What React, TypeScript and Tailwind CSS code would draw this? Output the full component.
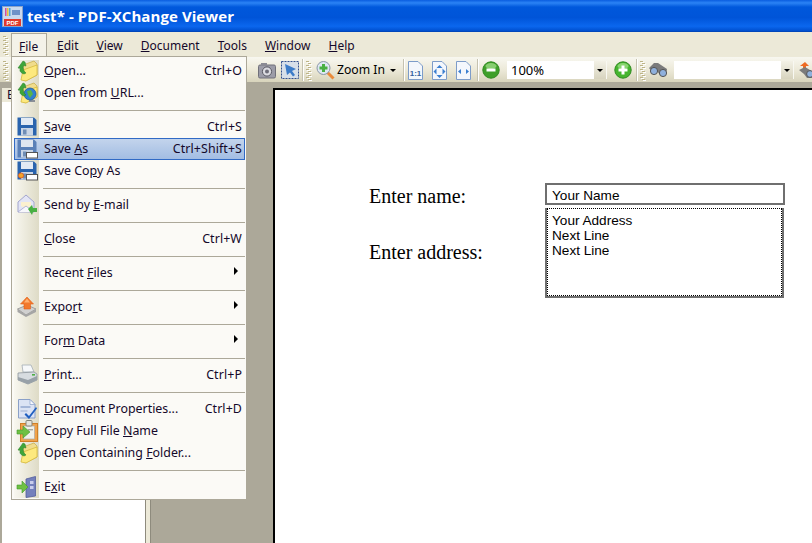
import React from "react";

const Folder = ({ globe }: { globe?: boolean }) => (
  <svg width="24" height="22" viewBox="0 0 24 22">
    <path d="M8 5 L19 1 L22 4 L22 15 L10 21 Z" fill="#f0dc8c" stroke="#c9b050" strokeWidth="0.8" />
    <path d="M8 10 L22 5 L22 15 L11 21 L6 20 Z" fill="#fde97e" stroke="#d6b93c" strokeWidth="0.8" />
    {globe ? <path d="M14 18 H20 V20 H14 Z" fill="#8a8f96" /> : null}
    {globe ? <circle cx="15" cy="12" r="6" fill="#2f7fd1" stroke="#1b5aa0" strokeWidth="0.8" /> : null}
    {globe ? <path d="M12 9 L16 8 L18 12 L15 16 L13 13 Z" fill="#57b34a" /> : null}
    <path d="M3 8 L8 1 L10 2 L11 6 L8.5 5.5 C7.5 8 8.5 11 11 13 L9 14 C5.5 13 4 10.5 5.5 8.5 Z" fill="#3fa63a" stroke="#2a7d28" strokeWidth="0.5" />
  </svg>
);
const Floppy = ({ variant }: { variant?: "as" | "copy" }) => (
  <svg width="24" height="22" viewBox="0 0 24 22">
    <path d="M2.5 1.5 H19 L21.5 4 V19.5 H2.5 Z" fill={variant === "as" ? "#5a80b8" : "#2a64ae"} />
    <rect x="6" y="2" width="12" height="7" fill={variant === "as" ? "#dfe6f0" : "#e2eaf4"} />
    <rect x="6" y="12" width="12" height="7.5" fill="#c9d5e5" />
    <rect x="8" y="13.5" width="3.5" height="5" fill="#6f8db5" />
    {variant ? <rect x="11.5" y="14.5" width="11" height="5.5" fill="#fff" stroke="#555" /> : null}
    {variant === "copy" ? <circle cx="6" cy="15.5" r="2.6" fill="#f4a52a" stroke="#d9531e" strokeWidth="0.8" /> : null}
  </svg>
);
const Mail = () => (
  <svg width="24" height="22" viewBox="0 0 24 22">
    <path d="M3 8 L11 1 L19 8 V18 H3 Z" fill="#e3e5f5" stroke="#a3a6cf" />
    <path d="M6 8 H16 V12 L11 15 L6 12 Z" fill="#fbf0cf" />
    <path d="M3 18 L11 12 L19 18" fill="#f7f7fc" stroke="#a3a6cf" strokeWidth="0.8" />
    <path d="M13 15 L17 11 L18 14 H22 V18 H18 L17 21 Z" fill="#49b043" />
  </svg>
);
const ExportIcon = () => (
  <svg width="24" height="22" viewBox="0 0 24 22">
    <path d="M2.5 13 L12 9 L21 13 L11 19 Z" fill="#d0d0d0" stroke="#8f8f8f" strokeWidth="0.8" />
    <path d="M2.5 13 V16 L11 21 L21 16 V13 L11 19 Z" fill="#a5a5a5" />
    <path d="M12 1 L18.5 8 H15.5 V13 H9 V8 H5.5 Z" fill="#f2782c" stroke="#e05f1a" strokeWidth="0.6" />
    <path d="M12 2.5 L9 6.5 H15 Z" fill="#ffb070" />
  </svg>
);
const Printer = () => (
  <svg width="24" height="22" viewBox="0 0 24 22">
    <path d="M7 1 H16 L19 8 H8 Z" fill="#f6f8fa" stroke="#a5adb5" strokeWidth="0.8" />
    <path d="M3 9 L19 8 L22 10 V16 L13 20 L3 16 Z" fill="#d7dce0" stroke="#8d959d" strokeWidth="0.8" />
    <path d="M3 13 L13 16 L22 12 V16 L13 20 L3 16 Z" fill="#98a1a8" />
    <rect x="17" y="10" width="3" height="1.6" fill="#4fae46" />
  </svg>
);
const DocProps = () => (
  <svg width="24" height="22" viewBox="0 0 24 22">
    <path d="M3.5 1.5 H15 L20 6.5 V20 H3.5 Z" fill="#dbe3f4" stroke="#8aa0c8" />
    <path d="M15 1.5 V6.5 H20 Z" fill="#f7f9fd" stroke="#8aa0c8" strokeWidth="0.7" />
    <rect x="5.5" y="8" width="10" height="2" fill="#a4b6d8" />
    <rect x="5.5" y="12" width="7" height="2" fill="#bcc9e2" />
    <path d="M11 15 L14 18 L21 9 L22 10.5 L14 21 L9.5 16.5 Z" fill="#1f5fc0" />
  </svg>
);
const Clip = () => (
  <svg width="24" height="22" viewBox="0 0 24 22">
    <rect x="5.5" y="3.5" width="17" height="18" fill="#f0a24a" stroke="#d07f28" />
    <rect x="8.5" y="6" width="11" height="13" fill="#f1f1ea" stroke="#aaa" strokeWidth="0.7" />
    <rect x="11" y="0.5" width="6" height="5.5" rx="1" fill="#e5e5e0" stroke="#85857a" />
    <rect x="13" y="9" width="5" height="1.4" fill="#a8a8a0" />
    <path d="M2 10 H8 V6 L15 12 L8 18 V14 H2 Z" fill="#6fc043" stroke="#3f9a2c" strokeWidth="0.6" />
  </svg>
);
const Door = () => (
  <svg width="24" height="22" viewBox="0 0 24 22">
    <path d="M11 3 L20.5 0.5 V20 L11 21.5 Z" fill="#7480bc" stroke="#525d9c" strokeWidth="0.8" />
    <rect x="15" y="5" width="3.5" height="3" fill="#c9cdec" />
    <rect x="15" y="10" width="3.5" height="3" fill="#c9cdec" />
    <path d="M2 9 H7 V5 L13 11 L7 17 V13 H2 Z" fill="#6fc043" stroke="#3f9a2c" strokeWidth="0.6" />
  </svg>
);

type Item =
  | { sep: true }
  | { sep?: false; pre: string; u: string; post: string; key?: string; icon?: React.ReactNode; sub?: boolean; active?: boolean };

const items: Item[] = [
  { pre: "", u: "O", post: "pen...", key: "Ctrl+O", icon: <Folder /> },
  { pre: "Open from ", u: "U", post: "RL...", icon: <Folder globe /> },
  { sep: true },
  { pre: "", u: "S", post: "ave", key: "Ctrl+S", icon: <Floppy /> },
  { pre: "Save ", u: "A", post: "s", key: "Ctrl+Shift+S", icon: <Floppy variant="as" />, active: true },
  { pre: "Save Co", u: "p", post: "y As", icon: <Floppy variant="copy" /> },
  { sep: true },
  { pre: "Send by ", u: "E", post: "-mail", icon: <Mail /> },
  { sep: true },
  { pre: "", u: "C", post: "lose", key: "Ctrl+W" },
  { sep: true },
  { pre: "Recent ", u: "F", post: "iles", sub: true },
  { sep: true },
  { pre: "Expo", u: "r", post: "t", sub: true, icon: <ExportIcon /> },
  { sep: true },
  { pre: "For", u: "m", post: " Data", sub: true },
  { sep: true },
  { pre: "", u: "P", post: "rint...", key: "Ctrl+P", icon: <Printer /> },
  { sep: true },
  { pre: "", u: "D", post: "ocument Properties...", key: "Ctrl+D", icon: <DocProps /> },
  { pre: "Copy Full File ", u: "N", post: "ame", icon: <Clip /> },
  { pre: "Open Containing ", u: "F", post: "older...", icon: <Folder /> },
  { sep: true },
  { pre: "E", u: "x", post: "it", icon: <Door /> },
];

const Grip = () => (
  <div className="flex w-[5px] shrink-0 flex-col gap-[1px] self-center">
    {[0, 1, 2, 3, 4, 5, 6, 7, 8, 9].map((i) => (
      <div key={i} className={`h-[1px] w-[3px] bg-[#bdb487] shadow-[1px_1px_0_#fff] ${i % 2 ? "ml-[2px]" : ""}`} />
    ))}
  </div>
);

const menus = [
  ["E", "dit"],
  ["V", "iew"],
  ["D", "ocument"],
  ["T", "ools"],
  ["W", "indow"],
  ["H", "elp"],
];

const Caret = () => <div className="h-0 w-0 border-x-[3px] border-t-[3px] border-x-transparent border-t-black" />;

const Divider = () => <div className="h-[22px] w-[1px] shrink-0 bg-[#c5c2b0] shadow-[1px_0_0_#fff]" />;

const PageIcon = ({ label, kind }: { label?: string; kind?: "fit" | "width" }) => (
  <svg width="15" height="19" viewBox="0 0 15 19">
    <path d="M0.5 0.5 H10 L14.5 5 V18.5 H0.5 Z" fill="#f4f7fc" stroke="#7d9cc9" />
    {label ? <text x="7.5" y="15" textAnchor="middle" fontSize="8" fontWeight="700" fill="#345f9e" fontFamily="Liberation Sans">{label}</text> : null}
    {kind === "fit" ? <path d="M7.5 4 L10.5 7 H4.5 Z M7.5 17 L4.5 14 H10.5 Z M1.5 10.5 L4.5 7.5 V13.5 Z M13.5 10.5 L10.5 7.5 V13.5 Z" fill="#3b7fd0" /> : null}
    {kind === "width" ? <path d="M2 10.5 L5 8 V13 Z M13 10.5 L10 8 V13 Z" fill="#3b7fd0" /> : null}
  </svg>
);

const RoundBtn = ({ plus }: { plus?: boolean }) => (
  <svg width="18" height="18" viewBox="0 0 18 18">
    <circle cx="9" cy="9" r="8.2" fill={plus ? "#45b52e" : "#3f9f2a"} stroke="#2f8a20" />
    <ellipse cx="9" cy="5" rx="5.5" ry="3" fill="#a6e28e" opacity="0.7" />
    <rect x="4.5" y="7.5" width="9" height="3" fill="#fff" />
    {plus ? <rect x="7.5" y="4.5" width="3" height="9" fill="#fff" /> : null}
  </svg>
);

const Binoc = () => (
  <svg width="20" height="16" viewBox="0 0 20 16">
    <path d="M1 6 L6 1 H10 L19 7 L18 13 H12 L9 9 L5 11 Z" fill="#7b7b7b" />
    <circle cx="6" cy="9" r="3.6" fill="#8fb0dc" stroke="#555" />
    <circle cx="15" cy="11" r="3.6" fill="#8fb0dc" stroke="#555" />
  </svg>
);

const Combo = ({ w, text }: { w: string; text?: string }) => (
  <div className={`flex h-[18px] items-stretch justify-between border-r border-[#f8f8f2] bg-white ${w}`}>
    <span className="pl-[4px] text-[13px] leading-[19px] text-black">{text}</span>
    <div className="flex w-[12px] items-center justify-center bg-gradient-to-b from-[#f3f1e6] to-[#d8d4bf]">
      <Caret />
    </div>
  </div>
);

export default function App() {
  return (
    <div className="relative flex h-[543px] w-[812px] flex-col overflow-hidden bg-[#aca899] font-['Noto_Sans',sans-serif] text-[12px] text-[#14082a]">
      {/* title bar */}
      <div className="flex h-[32px] items-center bg-[linear-gradient(to_bottom,#0a5de0_0%,#2b83f5_9%,#0058dc_22%,#0054d8_55%,#0b67ee_82%,#0050d0_96%,#003fae_100%)] pl-[2px]">
        <svg width="21" height="21" viewBox="0 0 21 21">
          <rect x="0.5" y="0.5" width="20" height="20" fill="#c9d9ef" stroke="#8ba3c9" />
          <rect x="3" y="2" width="1.5" height="8" fill="#d64f9a" />
          <rect x="5" y="2" width="1.5" height="8" fill="#e9c23a" />
          <rect x="7" y="2" width="1.5" height="8" fill="#53a8d6" />
          <rect x="10" y="4" width="8" height="5" fill="#6f92c9" />
          <rect x="2" y="13" width="17" height="7" fill="#e23a2c" />
          <text x="10.5" y="19" textAnchor="middle" fontSize="6" fontWeight="700" fill="#fff" fontFamily="Liberation Sans">PDF</text>
        </svg>
        <span className="ml-[4px] font-['Open_Sans',sans-serif] text-[15px] font-bold tracking-[0.08px] text-white">test* - PDF-XChange Viewer</span>
      </div>

      {/* menu bar */}
      <div className="flex h-[25px] items-center bg-[#ece9d8] pl-[3px] pt-[1px]">
        <Grip />
        <div className="ml-[3px] h-[24px] w-[36px] border border-b-0 border-[#aca899] bg-[#f4f2e8] pl-[7px] leading-[25px]">
          <span className="underline">F</span>ile
        </div>
        <div className="ml-[10px] flex gap-[18px] pt-[1px]">
          {menus.map(([u, r]) => (
            <span key={u} className="leading-[26px]">
              <span className="underline">{u}</span>
              {r}
            </span>
          ))}
        </div>
      </div>

      {/* toolbar */}
      <div className="flex h-[25px] items-center border-t border-[#f7f6ef] bg-gradient-to-b from-[#f7f6ee] via-[#ece9d8] to-[#d8d4bc] pl-[3px] text-black [&>*]:shrink-0">
        <Grip />
        <svg width="18" height="17" viewBox="0 0 18 17" className="ml-[250px]">
          <rect x="0.5" y="3" width="17" height="13" rx="1.5" fill="#9c9ca8" stroke="#70707a" />
          <rect x="3" y="1" width="6" height="3" fill="#8a8a94" />
          <circle cx="9" cy="9.5" r="4.6" fill="#dcdce2" stroke="#5a5a64" />
          <circle cx="9" cy="9.5" r="2" fill="#6e6e7a" />
        </svg>
        <svg width="18" height="18" viewBox="0 0 18 18" className="ml-[5px]">
          <rect x="0.5" y="0.5" width="17" height="17" fill="#d7dfe9" stroke="#33508f" strokeDasharray="2 1" />
          <path d="M4 3 L15 8 L11 10 L14 14 L12 15.5 L9 11.5 L6 14 Z" fill="#3d7cc8" />
        </svg>
        <div className="ml-[3px]"><Divider /></div>
        <div className="ml-[3px]"><Grip /></div>
        <svg width="19" height="20" viewBox="0 0 19 20" className="ml-[5px]">
          <path d="M11 12 L17.5 18.5" stroke="#ea8a3a" strokeWidth="3" />
          <circle cx="7.5" cy="8" r="6.5" fill="#dfe8f3" stroke="#8a97a8" />
          <path d="M6 4 H9 V6.5 H11.5 V9.5 H9 V12 H6 V9.5 H3.5 V6.5 H6 Z" fill="#49b043" />
        </svg>
        <span className="ml-[2px] w-[48px] whitespace-nowrap text-[12.2px]">Zoom In</span>
        <div className="ml-[5px]"><Caret /></div>
        <div className="ml-[7px]"><Divider /></div>
        <div className="ml-[4px] flex items-center gap-[9px]">
          <PageIcon label="1:1" />
          <PageIcon kind="fit" />
          <PageIcon kind="width" />
        </div>
        <div className="ml-[6px]"><Divider /></div>
        <div className="ml-[4px]"><RoundBtn /></div>
        <div className="ml-[7px]"><Combo w="w-[100px]" text="100%" /></div>
        <div className="ml-[7px]"><RoundBtn plus /></div>
        <div className="ml-[4px]"><Divider /></div>
        <div className="ml-[3px]"><Grip /></div>
        <div className="ml-[3px]"><Binoc /></div>
        <div className="ml-[6px]"><Combo w="w-[120px]" /></div>
        <svg width="16" height="18" viewBox="0 0 16 18" className="ml-[5px]">
          <path d="M6 1 L10 5 H7 L7 8 H4 V5 H1 Z" fill="#ee6a22" />
          <path d="M0 9 L6 6 L16 12 L15 17 H8 L5 13 Z" fill="#7b7b7b" />
          <circle cx="11" cy="13" r="3.4" fill="#8fb0dc" stroke="#555" />
        </svg>
      </div>

      {/* strip */}
      <div className="h-[6px] bg-[#aca899]" />

      {/* workspace */}
      <div className="flex min-h-0 flex-1">
        <div className="ml-[2px] flex w-[143px] flex-col bg-white">
          <div className="h-[14px] bg-[#ece9d8] pl-[5px] text-[12px] leading-[14px]">B</div>
        </div>
        <div className="w-[6px] border-x border-[#8e8b7d] bg-[#ece9d8]" />
        <div className="w-[122px]" />
        <div className="flex-1 border-l-2 border-t-2 border-black bg-white">
          <div className="pl-[94px] pt-[96px] font-['Liberation_Serif',serif] text-[20px] leading-[23px] text-black">
            <div className="flex h-[0px] items-start">
              <span className="-mt-[1px] w-[176px]">Enter name:</span>
              <div className="-mt-[3px] flex h-[22px] w-[240px] shrink-0 items-center border-2 border-[#6f6f6f] pl-[5px] pt-[2px] font-['Liberation_Sans',sans-serif] text-[13.6px]">Your Name</div>
            </div>
            <div className="mt-[55px] flex h-[0px] items-start">
              <span className="w-[176px]">Enter address:</span>
              <div className="-mt-[33px] h-[90px] w-[239px] shrink-0 border-x-2 border-b-2 border-[#6f6f6f] bg-white">
                <div className="h-full border border-dotted border-black pl-[4px] pt-[4px] font-['Liberation_Sans',sans-serif] text-[13.6px] leading-[15px]">
                  <div>Your Address</div>
                  <div>Next Line</div>
                  <div>Next Line</div>
                </div>
              </div>
            </div>
          </div>
        </div>
      </div>

      {/* open File menu */}
      <div className="absolute left-[11px] top-[56px] w-[236px] border border-[#aca899] bg-[#fbfaf6] pb-[1px] pl-[2px] pr-[1px] pt-[3px] text-[12.4px]">
        <div className="relative flex flex-col bg-[linear-gradient(to_right,#f8f7f0_0,#dedbc6_25px,transparent_25px)]">
          {items.map((it, i) =>
            it.sep ? (
              <div key={i} className="flex h-[12px] items-center pl-[29px]">
                <div className="h-[1px] w-full bg-[#aca899]" />
              </div>
            ) : (
              <div
                key={i}
                className={`flex h-[22px] items-center ${it.active ? "border border-[#316ac5] bg-gradient-to-b from-[#c3d4ec] to-[#a3bde3]" : ""}`}
              >
                <div className={`flex shrink-0 items-center justify-center ${it.active ? "w-[24px]" : "w-[25px]"}`}>{it.icon}</div>
                <div className="flex-1 whitespace-pre pl-[5px]">
                  {it.pre}
                  <span className="underline">{it.u}</span>
                  {it.post}
                </div>
                {it.key ? <div className={`tracking-[0.1px] ${it.active ? "pr-[2px]" : "pr-[3px]"}`}>{it.key}</div> : null}
                {it.sub ? (
                  <div className="mb-[5px] mr-[7px] h-0 w-0 border-y-[4px] border-l-[4px] border-y-transparent border-l-black" />
                ) : null}
              </div>
            )
          )}
        </div>
      </div>
    </div>
  );
}
